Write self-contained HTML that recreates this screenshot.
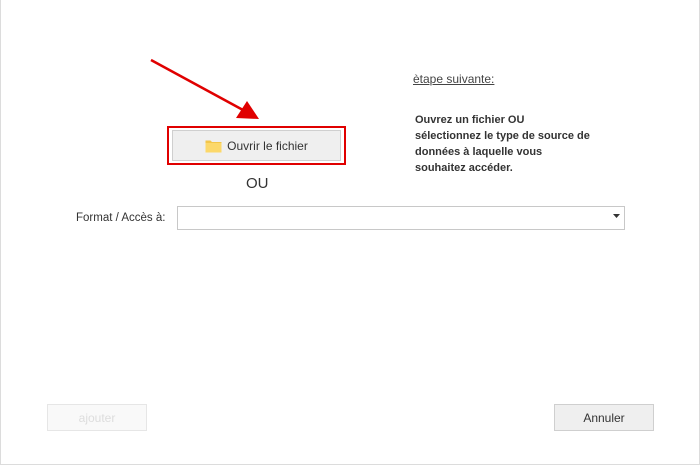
<!DOCTYPE html>
<html><head><meta charset="utf-8"><style>
*{margin:0;padding:0;box-sizing:border-box}
body{width:700px;height:465px;background:#fff;position:relative;overflow:hidden;font-family:"Liberation Sans",sans-serif;color:#333}
.frame{position:absolute;left:0;top:0;width:700px;height:465px;border:1px solid #dcdcdc;border-top:none}
.abs{position:absolute}
.btn{position:absolute;background:#efefef;border:1px solid #cfcfcf;font-size:12px;color:#333;display:flex;align-items:center;justify-content:center}
</style></head><body>
<div class="frame"></div>
<svg class="abs" style="left:0;top:0" width="700" height="465">
<line x1="151" y1="60" x2="243" y2="110" stroke="#e00000" stroke-width="2.5"/>
<polygon points="259,119 236,118 247,101" fill="#e00000"/>
</svg>
<div class="abs" style="left:167px;top:126px;width:179px;height:39px;border:2px solid #e00000"></div>
<div class="btn" style="left:172px;top:130px;width:169px;height:31px;">
<svg width="17" height="14" style="margin-right:5px"><path d="M0.5 1.5h5l1.5 1.5h9.5v10.5h-16z" fill="#f3c64a"/><rect x="0.5" y="4" width="16" height="9.5" fill="#fcd86a"/></svg>Ouvrir le fichier</div>
<div class="abs" style="left:246px;top:175px;font-size:15px;color:#333">OU</div>
<div class="abs" style="left:76px;top:212px;font-size:11.5px;color:#333">Format / Accès à:</div>
<div class="abs" style="left:177px;top:206px;width:448px;height:24px;border:1px solid #c8c8c8;background:#fff"></div>
<svg class="abs" style="left:613px;top:214px" width="8" height="5"><polygon points="0,0 7,0 3.5,4" fill="#333"/></svg>
<div class="abs" style="left:413px;top:72px;font-size:12px;text-decoration:underline;color:#444">ètape suivante:</div>
<div class="abs" style="left:415px;top:112px;font-size:11px;font-weight:bold;line-height:16px;color:#333">Ouvrez un fichier OU<br>sélectionnez le type de source de<br>données à laquelle vous<br>souhaitez accéder.</div>
<div class="btn" style="left:47px;top:404px;width:100px;height:27px;background:#f9f9f9;border-color:#e6e6e6;color:#ddd">ajouter</div>
<div class="btn" style="left:554px;top:404px;width:100px;height:27px;">Annuler</div>
</body></html>
